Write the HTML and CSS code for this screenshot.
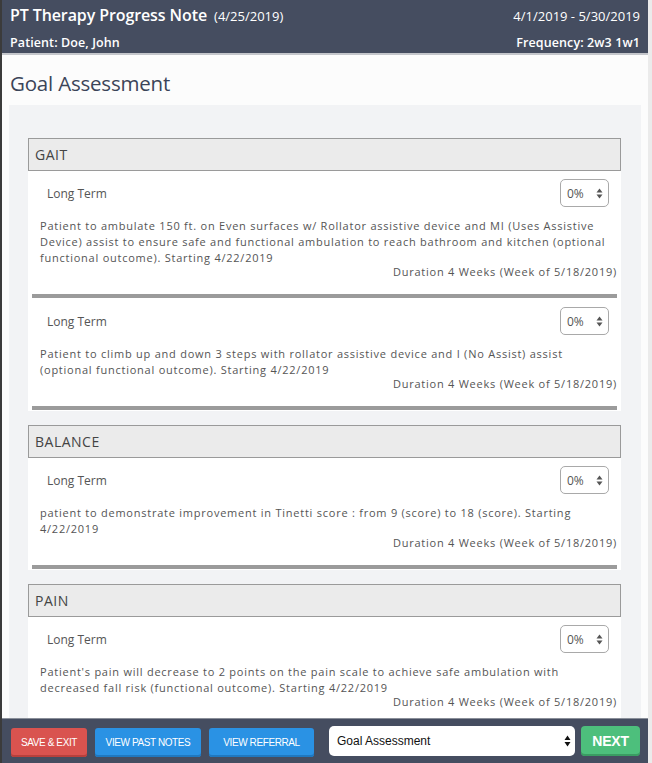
FILE: index.html
```html
<!DOCTYPE html>
<html>
<head>
<meta charset="utf-8">
<link rel="stylesheet" href="styles.css">
</head>
<body>
<div class="modal">
  <header class="top">
    <div class="row">
      <div class="title">PT Therapy Progress Note <span class="date">(4/25/2019)</span></div>
      <div class="range">4/1/2019 - 5/30/2019</div>
    </div>
    <div class="row row2">
      <div class="patient">Patient: Doe, John</div>
      <div class="freq">Frequency: 2w3 1w1</div>
    </div>
  </header>
  <main class="content">
    <h2 class="heading">Goal Assessment</h2>
    <div class="panel">
      <div class="group">
        <div class="section">GAIT</div>
        <div class="goal">
          <div class="goal-top">
            <span class="term">Long Term</span>
            <div class="pct"><span>0%</span><svg class="spin" width="7" height="11" viewBox="0 0 7 11"><path d="M3.5 0.5 L6.5 4.5 H0.5 Z M3.5 10.5 L6.5 6.5 H0.5 Z" fill="#555"/></svg></div>
          </div>
          <p class="desc">Patient to ambulate 150 ft. on Even surfaces w/ Rollator assistive device and MI (Uses Assistive Device) assist to ensure safe and functional ambulation to reach bathroom and kitchen (optional functional outcome). Starting 4/22/2019</p>
          <div class="dur">Duration 4 Weeks (Week of 5/18/2019)</div>
          <div class="bar"></div>
        </div>
        <div class="goal">
          <div class="goal-top">
            <span class="term">Long Term</span>
            <div class="pct"><span>0%</span><svg class="spin" width="7" height="11" viewBox="0 0 7 11"><path d="M3.5 0.5 L6.5 4.5 H0.5 Z M3.5 10.5 L6.5 6.5 H0.5 Z" fill="#555"/></svg></div>
          </div>
          <p class="desc">Patient to climb up and down 3 steps with rollator assistive device and I (No Assist) assist (optional functional outcome). Starting 4/22/2019</p>
          <div class="dur">Duration 4 Weeks (Week of 5/18/2019)</div>
          <div class="bar"></div>
        </div>
      </div>
      <div class="group">
        <div class="section">BALANCE</div>
        <div class="goal">
          <div class="goal-top">
            <span class="term">Long Term</span>
            <div class="pct"><span>0%</span><svg class="spin" width="7" height="11" viewBox="0 0 7 11"><path d="M3.5 0.5 L6.5 4.5 H0.5 Z M3.5 10.5 L6.5 6.5 H0.5 Z" fill="#555"/></svg></div>
          </div>
          <p class="desc">patient to demonstrate improvement in Tinetti score : from 9 (score) to 18 (score). Starting 4/22/2019</p>
          <div class="dur">Duration 4 Weeks (Week of 5/18/2019)</div>
          <div class="bar"></div>
        </div>
      </div>
      <div class="group">
        <div class="section">PAIN</div>
        <div class="goal">
          <div class="goal-top">
            <span class="term">Long Term</span>
            <div class="pct"><span>0%</span><svg class="spin" width="7" height="11" viewBox="0 0 7 11"><path d="M3.5 0.5 L6.5 4.5 H0.5 Z M3.5 10.5 L6.5 6.5 H0.5 Z" fill="#555"/></svg></div>
          </div>
          <p class="desc">Patient's pain will decrease to 2 points on the pain scale to achieve safe ambulation with decreased fall risk (functional outcome). Starting 4/22/2019</p>
          <div class="dur">Duration 4 Weeks (Week of 5/18/2019)</div>
          <div class="bar"></div>
        </div>
      </div>
    </div>
  </main>
  <footer class="foot">
    <button class="btn btn-red">SAVE &amp; EXIT</button>
    <button class="btn btn-blue">VIEW PAST NOTES</button>
    <button class="btn btn-blue btn-ref">VIEW REFERRAL</button>
    <div class="nav-select"><span>Goal Assessment</span><svg width="7" height="12" viewBox="0 0 7 12"><path d="M3.5 0.5 L6.5 5 H0.5 Z M3.5 11.5 L6.5 7 H0.5 Z" fill="#111"/></svg></div>
    <button class="btn btn-next">NEXT</button>
  </footer>
</div>
</body>
</html>
```
FILE: styles.css
```css
* { box-sizing: border-box; }
html, body { margin: 0; padding: 0; }
body {
  width: 652px;
  height: 763px;
  overflow: hidden;
  background: linear-gradient(to right, #3b3b3b 0, #3b3b3b 2px, #ebebeb 2px);
  font-family: "Open Sans", "Liberation Sans", sans-serif;
}
.modal {
  margin-left: 2px;
  width: 646px;
  height: 763px;
  display: flex;
  flex-direction: column;
  background: #fcfcfc;
}
.top {
  background: #454d60;
  color: #fff;
  height: 55px;
  border-bottom: 2px solid #c4c6cb;
  padding: 4px 8px 0 8px;
  flex: none;
}
.row {
  display: flex;
  justify-content: space-between;
  align-items: baseline;
  height: 27px;
}
.row2 { height: 22px; align-items: center; }
.title { font-size: 16px; font-weight: 600; letter-spacing: -0.1px; }
.title .date { font-size: 13px; font-weight: 400; margin-left: 3px; letter-spacing: 0; }
.range { font-size: 13px; }
.patient, .freq { font-size: 12.5px; font-weight: 600; letter-spacing: 0.1px; }
.content {
  flex: 1;
  overflow: hidden;
  display: flex;
  flex-direction: column;
}
.heading {
  margin: 0;
  padding: 14px 0 0 8px;
  height: 50px;
  font-size: 20.5px;
  font-weight: 400;
  color: #3b4458;
  letter-spacing: -0.2px;
  flex: none;
}
.panel {
  margin: 0 7px;
  background: #f2f3f5;
  padding: 33px 20px 0 19px;
  flex: 1;
  overflow: hidden;
}
.group { margin-bottom: 14px; }
.section {
  height: 33px;
  background: #ebebeb;
  border: 1px solid #9a9a9a;
  padding: 0 0 0 6px;
  line-height: 31px;
  font-size: 14px;
  color: #444;
  letter-spacing: 0.5px;
}
.goal {
  background: #fff;
  padding: 8px 0 1px 0;
}
.goal-top {
  display: flex;
  justify-content: space-between;
  align-items: center;
  padding: 0 12px 0 19px;
  height: 28px;
}
.term { font-size: 12px; color: #555; }
.pct {
  width: 49px;
  height: 28px;
  border: 1px solid #a9a9a9;
  border-radius: 5px;
  display: flex;
  align-items: center;
  justify-content: space-between;
  padding: 0 5px 0 6px;
  font-size: 12px;
  color: #555;
}
.desc {
  margin: 11px 4px 0 12px;
  font-size: 11px;
  line-height: 16px;
  color: #555;
  letter-spacing: 0.76px;
}
.dur {
  text-align: right;
  margin: -2px 4px 0 0;
  font-size: 11px;
  line-height: 16px;
  color: #555;
  letter-spacing: 0.76px;
}
.bar {
  margin: 14px 4px 0 4px;
  height: 4px;
  background: #9b9b9b;
}
.foot {
  flex: none;
  height: 45px;
  background: #454d60;
  border-top: 1px solid #8a8f99;
  display: flex;
  align-items: center;
  padding: 0 7px 0 9px;
}
.btn {
  border: none;
  border-radius: 3px;
  color: #fff;
  font-family: "Liberation Sans", sans-serif;
  font-size: 10px;
  letter-spacing: -0.4px;
  height: 29px;
  padding: 0;
  margin-right: 8px;
  margin-top: 2px;
}
.btn-red { background: #d9534f; width: 76px; box-shadow: inset 0 -2px 0 #b8403c; }
.btn-blue { background: #2a92e4; width: 106px; box-shadow: inset 0 -2px 0 #1f78c0; }
.btn-ref { width: 105px; margin-right: 15px; }
.nav-select {
  width: 246px;
  height: 30px;
  background: #fff;
  border-radius: 5px;
  display: flex;
  align-items: center;
  justify-content: space-between;
  padding: 0 4px 0 8px;
  font-family: "Liberation Sans", sans-serif;
  font-size: 12px;
  color: #111;
  margin-right: 6px;
}
.btn-next {
  background: #4dbf7c;
  width: 59px;
  height: 30px;
  margin: 0;
  font-family: "Liberation Sans", sans-serif;
  font-weight: 700;
  font-size: 14px;
  letter-spacing: -0.2px;
  border-radius: 4px;
  box-shadow: inset 0 -2px 0 #3a9c62;
}
```
